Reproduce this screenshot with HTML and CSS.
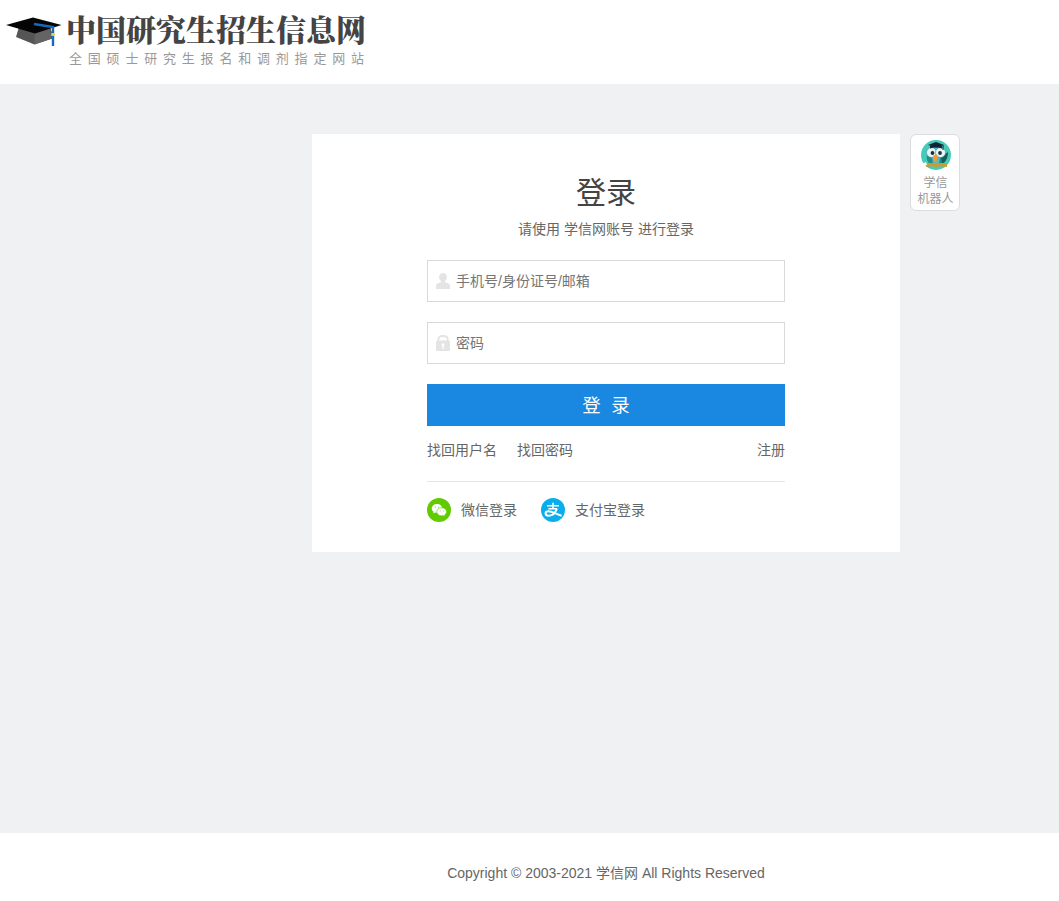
FILE: index.html
```html
<!DOCTYPE html>
<html lang="zh-CN">
<head>
<meta charset="utf-8">
<title>登录</title>
<link rel="stylesheet" href="styles.css">
</head>
<body>
<header class="header">
  <svg class="cap" width="56" height="31" viewBox="0 0 56 31">
    <path d="M13 10h31l4 11-19.500 6.500L10 20z" fill="#555"/>
    <path d="M28.500 15l15-4 2.500 10.500-17.500 6z" fill="#646464"/>
    <path d="M0 8L27 .5 55.500 8 29 16.500z" fill="#050505"/>
    <path d="M28 7l19 3v19" fill="none" stroke="#1769bd" stroke-width="2.400"/>
    <path d="M45.300 16h3.400v3h-3.400z" fill="#e3d43c"/>
  </svg>
  <div class="brand">
    <div class="brand-name">中国研究生招生信息网</div>
    <div class="brand-sub">全国硕士研究生报名和调剂指定网站</div>
  </div>
</header>
<main class="main">
  <section class="card">
    <h1 class="title">登录</h1>
    <p class="hint">请使用 学信网账号 进行登录</p>
    <form class="form">
      <label class="field">
        <svg width="14" height="16" viewBox="0 0 14 16" fill="#e4e4e4"><path d="M7 0C4.500 0 3 1.700 3 4c0 1.700.8 3.300 2 4v1.300L1.300 10.600C.3 11 0 12 0 13v3h14v-3c0-1-.3-2-1.300-2.400L9 9.300V8c1.200-.7 2-2.300 2-4 0-2.300-1.500-4-4-4z"/></svg>
        <input class="input" type="text" placeholder="手机号/身份证号/邮箱">
      </label>
      <label class="field">
        <svg width="14" height="16" viewBox="0 0 14 16"><path d="M2.300 7V4C2.300 2 4 1 7 1s4.700 1 4.700 3v3" fill="none" stroke="#e4e4e4" stroke-width="1.900"/><rect y="5.500" width="14" height="10.500" rx="1.500" fill="#e4e4e4"/><path d="M5.700 8.500h2.600v2l-.6.5v3H6.300v-3l-.6-.5z" fill="#fff"/></svg>
        <input class="input" type="password" placeholder="密码">
      </label>
      <button class="submit" type="button">登&nbsp;&nbsp;录</button>
    </form>
    <nav class="links"><a>找回用户名</a><a>找回密码</a><a class="register">注册</a></nav>
    <div class="social">
      <a class="wechat"><svg width="24" height="24" viewBox="0 0 24 24"><circle cx="12" cy="12" r="12" fill="#62cb00"/><path d="M10 6c-3 0-5.200 1.900-5.200 4.400 0 1.400.7 2.600 1.900 3.400l-.5 1.800 2-1c.6.200 1.200.200 1.800.200 3 0 5.200-1.900 5.200-4.400S13 6 10 6z" fill="#fff"/><path d="M14.700 9.700c-2.800 0-4.900 1.800-4.900 4s2.100 4.100 4.900 4.100c.5 0 1-.1 1.500-.2l1.900 1-.5-1.700c1.200-.7 1.900-1.900 1.900-3.200 0-2.200-2-4-4.800-4z" fill="#fff" stroke="#62cb00" stroke-width=".6"/><g fill="#8fda4b"><circle cx="8.300" cy="9.200" r=".65"/><circle cx="11.700" cy="9.200" r=".65"/><circle cx="13.200" cy="13" r=".55"/><circle cx="16.400" cy="13" r=".55"/></g></svg>微信登录</a>
      <a><svg width="24" height="24" viewBox="0 0 24 24"><circle cx="12" cy="12" r="12" fill="#0baeed"/><g fill="none" stroke="#fff"><path d="M6 7.700h12M12 4.800v6M7.400 10.800h8.800" stroke-width="1.500"/><path d="M15.800 10.800c-1.300 4-4.200 6.900-7.700 6.900-2.300 0-3.500-.8-3.500-2.200s1.200-2.200 3-2.200c3.300 0 6.300 2.300 13 4.500" stroke-width="2"/></g></svg>支付宝登录</a>
    </div>
  </section>
  <aside class="robot">
    <svg width="30" height="30" viewBox="0 0 30 30">
      <circle cx="15" cy="15" r="15" fill="#45cbb8"/>
      <path d="M6 15c-1 4 1 9 5 10h9c5-2 6-7 6-12l-5 2-5 4z" fill="#218f86"/>
      <path d="M11 17h8l-1 7h-6z" fill="#5bb9c0"/>
      <path d="M20 16c3-1 6-3 7-4 0 6-2 9-6 12z" fill="#155e59"/>
      <circle cx="10.500" cy="12.500" r="5" fill="#e7f6f7" stroke="#468998" stroke-width=".6"/><circle cx="19.500" cy="12.500" r="5" fill="#e7f6f7" stroke="#468998" stroke-width=".6"/>
      <circle cx="11.500" cy="13" r="1.900" fill="#163043"/><circle cx="19" cy="13" r="1.900" fill="#163043"/>
      <path d="M12 16l3-2 2 2-2 6-3-2z" fill="#f39c2b"/>
      <path d="M9 6h12v2.500q-6-2-12 0z" fill="#122b40"/><path d="M7 5l8-3 8 3-8 2.500z" fill="#102437"/>
      <path d="M22 5v5" stroke="#102437"/>
      <path d="M5 23.500c4-1 7 0 10 .5 3-.5 7-1.500 11-.5v3.500c-4-1-8-1-11 0-3-1-6-1-10 0z" fill="#cf9a32"/>
      <path d="M1 24l4-2 1 3-4 1z" fill="#fff"/>
    </svg>
    <span>学信</span><span>机器人</span>
  </aside>
</main>
<footer class="footer">Copyright © 2003-2021 学信网 All Rights Reserved</footer>
</body>
</html>
```
FILE: styles.css
```css
* { box-sizing: border-box; }
body {
  height: 901px;
  margin: 0;
  display: flex;
  flex-direction: column;
  background: #fff;
  color: #666;
  font: 14px/20px "Liberation Sans", "Noto Sans CJK SC", sans-serif;
}
svg { display: block; flex: none; }
.header { display: flex; height: 84px; padding: 11px 0 0 6px; }
.cap { margin-top: 6px; }
.brand { margin-left: 4px; white-space: nowrap; }
.brand-name {
  color: #444;
  font: 900 30px/34px "Noto Serif CJK SC", "Noto Sans CJK SC", serif;
}
.brand-sub {
  margin-top: 4px;
  padding-left: 3px;
  color: #999;
  font-size: 13px;
  letter-spacing: 5.8px;
}
.main {
  display: flex;
  align-items: flex-start;
  gap: 10px;
  height: 749px;
  padding: 50px 0 0 312px;
  background: #f0f1f3;
}
.card { width: 588px; height: 418px; padding: 38px 115px 0; background: #fff; }
.title { margin: 0; color: #444; font-size: 30px; font-weight: 400; line-height: 42px; text-align: center; }
.hint { margin: 5px 0 21px; text-align: center; }
.form { display: flex; flex-direction: column; gap: 20px; }
.field {
  display: flex;
  align-items: center;
  gap: 6px;
  height: 42px;
  padding: 0 8px;
  border: 1px solid #d9d9d9;
}
.input { width: 300px; padding: 0; border: 0; outline: 0; background: transparent; font: inherit; }
.input::placeholder { color: #757575; }
.submit {
  height: 42px;
  padding: 1px 0 0;
  border: 0;
  background: #1a87e0;
  color: #fff;
  font: 18.5px/41px "Liberation Sans", "Noto Sans CJK SC", sans-serif;
}
.links { display: flex; gap: 20px; height: 56px; padding-top: 14px; border-bottom: 1px solid #e5e5e5; }
.register { margin-left: auto; }
.social { display: flex; gap: 24px; padding-top: 16px; }
.social a { display: flex; align-items: center; gap: 10px; }
.robot {
  display: flex;
  flex-direction: column;
  align-items: center;
  width: 50px;
  height: 77px;
  padding: 5px 0 0 1px;
  border: 1px solid #dcdcdc;
  border-radius: 6px;
  background: #fff;
  color: #999;
  font-size: 12px;
  line-height: 16px;
}
.robot svg { margin-bottom: 5px; }
.footer { padding: 30px 0 0 153px; text-align: center; }
```
